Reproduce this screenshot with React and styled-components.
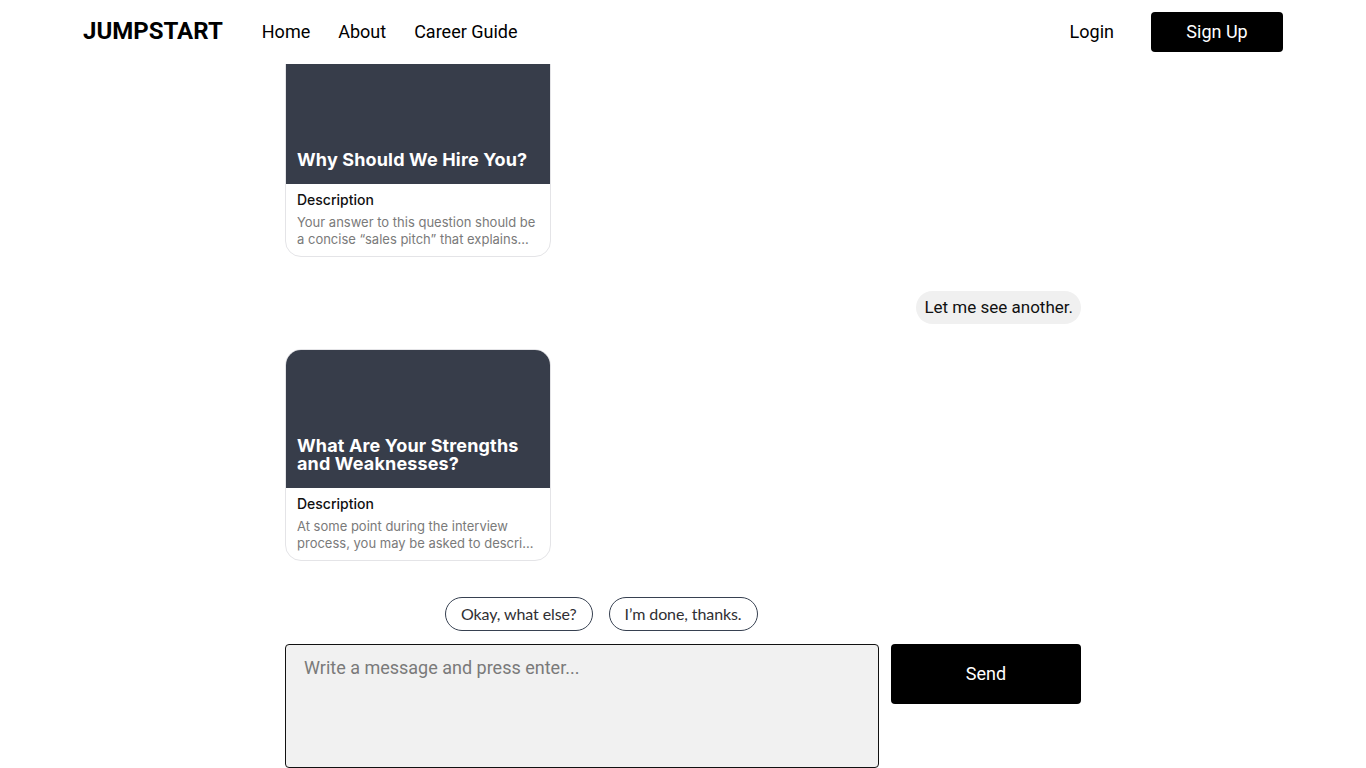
import React from "react";
import styled, { createGlobalStyle } from "styled-components";

const Global = createGlobalStyle`
  html, body { margin: 0; padding: 0; background: #fff; }
  body { font-family: Roboto, "Liberation Sans", sans-serif; color: #000; }
  * { box-sizing: border-box; }
`;

const Page = styled.div`
  height: 768px;
  display: flex;
  flex-direction: column;
  overflow: hidden;
`;

const Header = styled.header`
  height: 64px;
  flex: none;
  display: flex;
  align-items: center;
  padding: 0 83px;
  background: #fff;
  position: relative;
  z-index: 2;
`;

const Logo = styled.div`
  font-size: 24px;
  font-weight: 700;
  margin-right: 40px;
  margin-bottom: 2px;
`;

const Nav = styled.nav`
  display: flex;
  gap: 28px;
  flex: 1;
  margin-left: -1px;
  margin-bottom: 2px;
`;

const NavLink = styled.a`
  font-size: 18px;
  color: #000;
  text-decoration: none;
`;

const Login = styled.a`
  font-size: 18px;
  color: #000;
  margin-right: 37px;
  margin-bottom: 2px;
`;

const SignUp = styled.button`
  width: 132px;
  height: 40px;
  background: #000;
  color: #fff;
  border: none;
  border-radius: 4px;
  font-family: Roboto, sans-serif;
  font-size: 18px;
  padding: 0 0 2px;
`;

const Chat = styled.main`
  flex: 1;
  min-height: 0;
  width: 796px;
  margin: 0 auto;
  display: flex;
  flex-direction: column;
`;

const Messages = styled.div`
  flex: 1;
  min-height: 0;
  overflow: hidden;
  display: flex;
  flex-direction: column;
  justify-content: flex-end;
  padding-bottom: 36px;
`;

const Row = styled.div`
  display: flex;
  flex: none;
  justify-content: ${(p) => (p.$user ? "flex-end" : "flex-start")};
  padding-top: ${(p) => p.$top || 0}px;
`;

const Card = styled.div`
  width: 266px;
  border: 1px solid #e4e4e7;
  border-radius: 16px;
  overflow: hidden;
  background: #fff;
  font-family: Inter, "Noto Sans", sans-serif;
`;

const CardHero = styled.div`
  height: 139px;
  margin: -1px -1px 0;
  background: #373d4a;
  display: flex;
  align-items: flex-end;
  padding: 0 12px 15px;
`;

const CardTitle = styled.h3`
  margin: 0;
  color: #fff;
  font-size: 18px;
  line-height: 18px;
  font-weight: 700;
  letter-spacing: 0.15px;
`;

const CardBody = styled.div`
  padding: 6px 10px 8px 11px;
`;

const CardLabel = styled.div`
  font-size: 14px;
  line-height: 20px;
  font-weight: 500;
  color: #111;
`;

const CardText = styled.p`
  margin: 4px 0 0;
  font-size: 13px;
  line-height: 17px;
  color: #7a7a7a;
  display: -webkit-box;
  -webkit-line-clamp: 2;
  -webkit-box-orient: vertical;
  overflow: hidden;
`;

const Bubble = styled.div`
  background: #f0f0f0;
  border-radius: 17px;
  padding: 7px 8px;
  font-size: 17px;
  line-height: 19px;
  color: #111;
`;

const Quick = styled.div`
  display: flex;
  gap: 16px;
  padding-left: 160px;
  margin-bottom: 13px;
  flex: none;
`;

const QuickBtn = styled.button`
  height: 34px;
  padding: 0 15px 1px;
  border: 1px solid #374151;
  border-radius: 17px;
  background: #fff;
  font-family: Lato, sans-serif;
  font-size: 16px;
  letter-spacing: -0.1px;
  color: #2f2f33;
`;

const Composer = styled.div`
  display: flex;
  gap: 12px;
  align-items: flex-start;
  flex: none;
`;

const Input = styled.textarea`
  width: 594px;
  height: 124px;
  resize: none;
  background: #f1f1f1;
  border: 1px solid #111;
  border-radius: 4px;
  padding: 12px 18px;
  font-family: Roboto, sans-serif;
  font-size: 18px;
  line-height: 22px;
  &::placeholder { color: #7a7a7a; }
`;

const Send = styled.button`
  width: 190px;
  height: 60px;
  background: #000;
  color: #fff;
  border: none;
  border-radius: 4px;
  font-family: Roboto, sans-serif;
  font-size: 18px;
  padding: 0 0 1px;
`;

function QuestionCard({ title, text }) {
  return (
    <Card>
      <CardHero>
        <CardTitle>{title}</CardTitle>
      </CardHero>
      <CardBody>
        <CardLabel>Description</CardLabel>
        <CardText>{text}</CardText>
      </CardBody>
    </Card>
  );
}

export default function App() {
  return (
    <>
      <Global />
      <Page>
        <Header>
          <Logo>JUMPSTART</Logo>
          <Nav>
            <NavLink>Home</NavLink>
            <NavLink>About</NavLink>
            <NavLink>Career Guide</NavLink>
          </Nav>
          <Login>Login</Login>
          <SignUp>Sign Up</SignUp>
        </Header>
        <Chat>
          <Messages>
            <Row>
              <QuestionCard
                title="Why Should We Hire You?"
                text="Your answer to this question should be a concise “sales pitch” that explains..."
              />
            </Row>
            <Row $user $top={34}>
              <Bubble>Let me see another.</Bubble>
            </Row>
            <Row $top={25}>
              <QuestionCard
                title="What Are Your Strengths and Weaknesses?"
                text="At some point during the interview process, you may be asked to descri..."
              />
            </Row>
          </Messages>
          <Quick>
            <QuickBtn>Okay, what else?</QuickBtn>
            <QuickBtn>I’m done, thanks.</QuickBtn>
          </Quick>
          <Composer>
            <Input placeholder="Write a message and press enter..." />
            <Send>Send</Send>
          </Composer>
        </Chat>
      </Page>
    </>
  );
}
